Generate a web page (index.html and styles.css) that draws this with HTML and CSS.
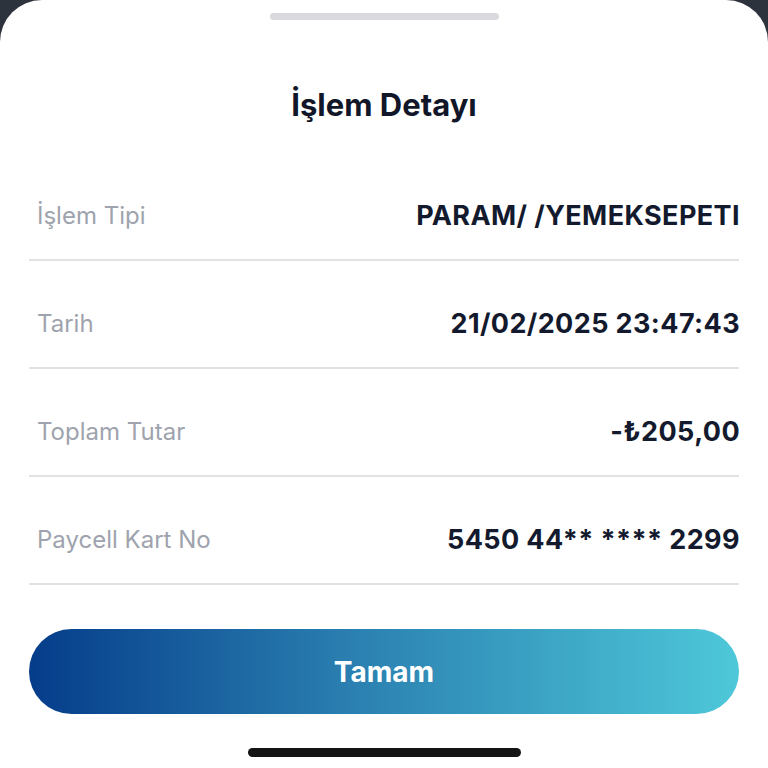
FILE: index.html
```html
<!DOCTYPE html>
<html lang="tr">
<head>
<meta charset="utf-8">
<link rel="stylesheet" href="styles.css">
</head>
<body>
<div class="sheet">
  <div class="handle"></div>
  <h1 class="title">İşlem Detayı</h1>
  <div class="rows">
    <div class="row"><span class="label">İşlem Tipi</span><span class="value">PARAM/ /YEMEKSEPETI</span></div>
    <div class="row"><span class="label">Tarih</span><span class="value">21/02/2025 23:47:43</span></div>
    <div class="row"><span class="label">Toplam Tutar</span><span class="value">-₺205,00</span></div>
    <div class="row"><span class="label">Paycell Kart No</span><span class="value">5450 44** **** 2299</span></div>
  </div>
  <button class="btn">Tamam</button>
  <div class="home"></div>
</div>
</body>
</html>
```
FILE: styles.css
```css
html, body {
  margin: 0;
  padding: 0;
  background: #2c333c;
}
body {
  width: 768px;
  height: 768px;
  overflow: hidden;
  font-family: Inter, "Noto Sans", sans-serif;
}
.sheet {
  background: #ffffff;
  height: 768px;
  border-radius: 42px 42px 0 0;
  padding: 0 29px;
  box-sizing: border-box;
  display: flex;
  flex-direction: column;
}
.handle {
  width: 229px;
  height: 7px;
  border-radius: 4px;
  background: #d9d9df;
  margin: 13px auto 0;
}
.title {
  margin: 67px 0 0;
  text-align: center;
  font-size: 31px;
  font-weight: 700;
  color: #111628;
  line-height: 36px;
  letter-spacing: 0;
}
.rows {
  margin-top: 30px;
  display: flex;
  flex-direction: column;
}
.row {
  height: 108px;
  box-sizing: border-box;
  border-bottom: 2px solid #e2e2e5;
  display: flex;
  justify-content: space-between;
  align-items: center;
  padding: 18px 0 0 8px;
}
.label {
  font-size: 24px;
  color: #9ea3ad;
  font-weight: 400;
}
.value {
  font-size: 27px;
  font-weight: 700;
  color: #141a2e;
  letter-spacing: 0.4px;
  margin-right: -1px;
}
.btn {
  margin-top: 44px;
  height: 85px;
  border: none;
  border-radius: 43px;
  background: linear-gradient(90deg, #053c8a 0%, #2a7fb0 45%, #4ec8d9 100%);
  color: #ffffff;
  font-family: Inter, "Noto Sans", sans-serif;
  font-size: 28px;
  font-weight: 700;
}
.home {
  width: 273px;
  height: 9px;
  border-radius: 5px;
  background: #141414;
  margin: 34px auto 0;
}
```
